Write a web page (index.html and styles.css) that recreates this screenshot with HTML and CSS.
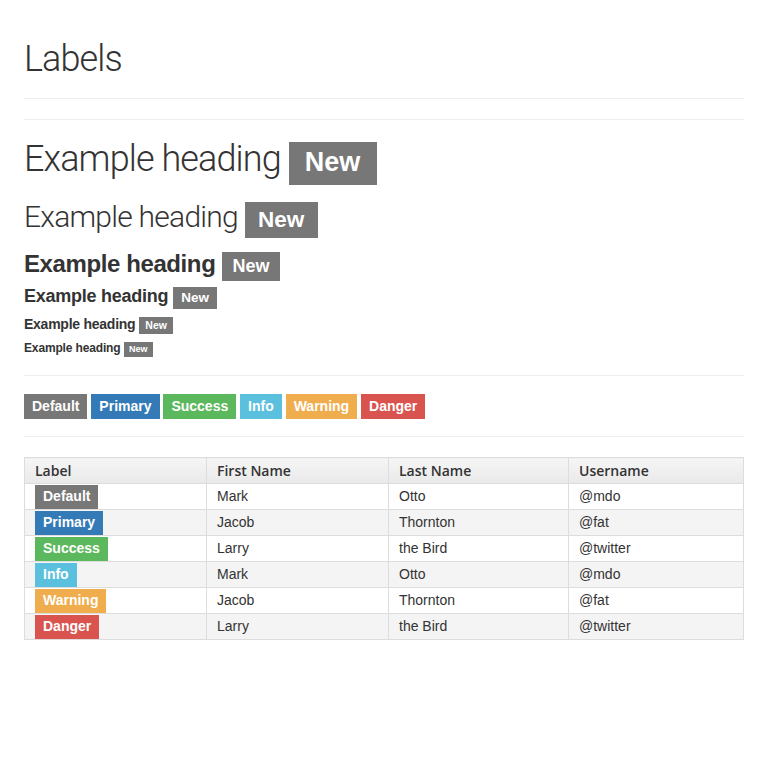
FILE: index.html
```html
<!DOCTYPE html>
<html>
<head>
<meta charset="utf-8">
<title>Labels</title>
<link rel="stylesheet" href="styles.css">
</head>
<body>
<div class="container">
  <div class="page-header">
    <h1 class="light">Labels</h1>
  </div>
  <hr>
  <h1 class="light">Example heading <span class="label label-default">New</span></h1>
  <h2 class="light">Example heading <span class="label label-default">New</span></h2>
  <h3>Example heading <span class="label label-default">New</span></h3>
  <h4>Example heading <span class="label label-default">New</span></h4>
  <h5>Example heading <span class="label label-default">New</span></h5>
  <h6>Example heading <span class="label label-default">New</span></h6>
  <hr>
  <p class="label-row">
    <span class="label label-md label-default">Default</span>
    <span class="label label-md label-primary">Primary</span>
    <span class="label label-md label-success">Success</span>
    <span class="label label-md label-info">Info</span>
    <span class="label label-md label-warning">Warning</span>
    <span class="label label-md label-danger">Danger</span>
  </p>
  <hr>
  <table class="table">
    <colgroup>
      <col class="c1"><col class="c2"><col class="c3"><col class="c4">
    </colgroup>
    <thead>
      <tr><th>Label</th><th>First Name</th><th>Last Name</th><th>Username</th></tr>
    </thead>
    <tbody>
      <tr><td><span class="label label-md label-default">Default</span></td><td>Mark</td><td>Otto</td><td>@mdo</td></tr>
      <tr class="stripe"><td><span class="label label-md label-primary">Primary</span></td><td>Jacob</td><td>Thornton</td><td>@fat</td></tr>
      <tr><td><span class="label label-md label-success">Success</span></td><td>Larry</td><td>the Bird</td><td>@twitter</td></tr>
      <tr class="stripe"><td><span class="label label-md label-info">Info</span></td><td>Mark</td><td>Otto</td><td>@mdo</td></tr>
      <tr><td><span class="label label-md label-warning">Warning</span></td><td>Jacob</td><td>Thornton</td><td>@fat</td></tr>
      <tr class="stripe"><td><span class="label label-md label-danger">Danger</span></td><td>Larry</td><td>the Bird</td><td>@twitter</td></tr>
    </tbody>
  </table>
</div>
</body>
</html>
```
FILE: styles.css
```css
html, body {
  margin: 0;
  padding: 0;
  background: #fff;
}
body {
  font-family: "Liberation Sans", Arial, sans-serif;
  font-size: 14px;
  line-height: 1.42857;
  color: #333;
}
.container {
  padding: 0 24px;
}
h1, h2, h3, h4, h5, h6 {
  font-family: "Liberation Sans", Arial, sans-serif;
  font-weight: 700;
  line-height: 1.1;
  color: #333;
}
h1, h2 {
  margin: 20px 0 10px;
}
h3 {
  margin: 18px 0 10px;
}
h4, h5, h6 {
  margin: 10px 0 10px;
}
h1 { font-size: 36px; }
h2 { font-size: 30px; }
h3 { font-size: 24px; letter-spacing: -0.4px; }
h4 { font-size: 18px; letter-spacing: -0.25px; }
h5 { font-size: 14px; letter-spacing: -0.25px; }
h6 { font-size: 12px; letter-spacing: -0.15px; }
.light {
  font-family: Roboto, "Liberation Sans", sans-serif;
  font-weight: 300;
  letter-spacing: -0.025em;
}
.page-header {
  margin: 40px 0 20px;
  padding-bottom: 8.5px;
  border-bottom: 1px solid #eee;
}
.page-header h1 {
  margin: 20px 0 10px;
}
hr {
  height: 0;
  margin: 20px 0;
  border: 0;
  border-top: 1px solid #eee;
}
.label {
  display: inline;
  font-family: "Liberation Sans", Arial, sans-serif;
  font-size: 75%;
  font-weight: 700;
  letter-spacing: 0;
  line-height: 0;
  color: #fff;
  padding: .2em .6em .3em;
  vertical-align: baseline;
  white-space: nowrap;
  border-radius: 0;
}
.label-md {
  font-size: 14px;
  padding: 4px 8px 4.5px;
}
.table .label-md {
  padding: 3px 8px 4.5px;
}
.label-default { background: #777; }
.label-primary { background: #337ab7; }
.label-success { background: #5cb85c; }
.label-info { background: #5bc0de; }
.label-warning { background: #f0ad4e; }
.label-danger { background: #d9534f; }
.label-row {
  margin: 0 0 10px;
  line-height: 20px;
}
.table {
  width: 100%;
  border-collapse: collapse;
  table-layout: fixed;
  border: 1px solid #ddd;
}
.c1 { width: 182px; }
.c2 { width: 182px; }
.c3 { width: 180px; }
.table th, .table td {
  border: 1px solid #ddd;
  height: 25px;
  padding: 0 10px;
  line-height: 25px;
  text-align: left;
  vertical-align: middle;
  box-sizing: border-box;
}
.table th {
  font-family: "Open Sans", "Liberation Sans", sans-serif;
  font-weight: 600;
  font-size: 14px;
  background: linear-gradient(#f6f6f6, #e9e9e9);
}
.table tr.stripe td {
  background: #f4f4f4;
}
```
